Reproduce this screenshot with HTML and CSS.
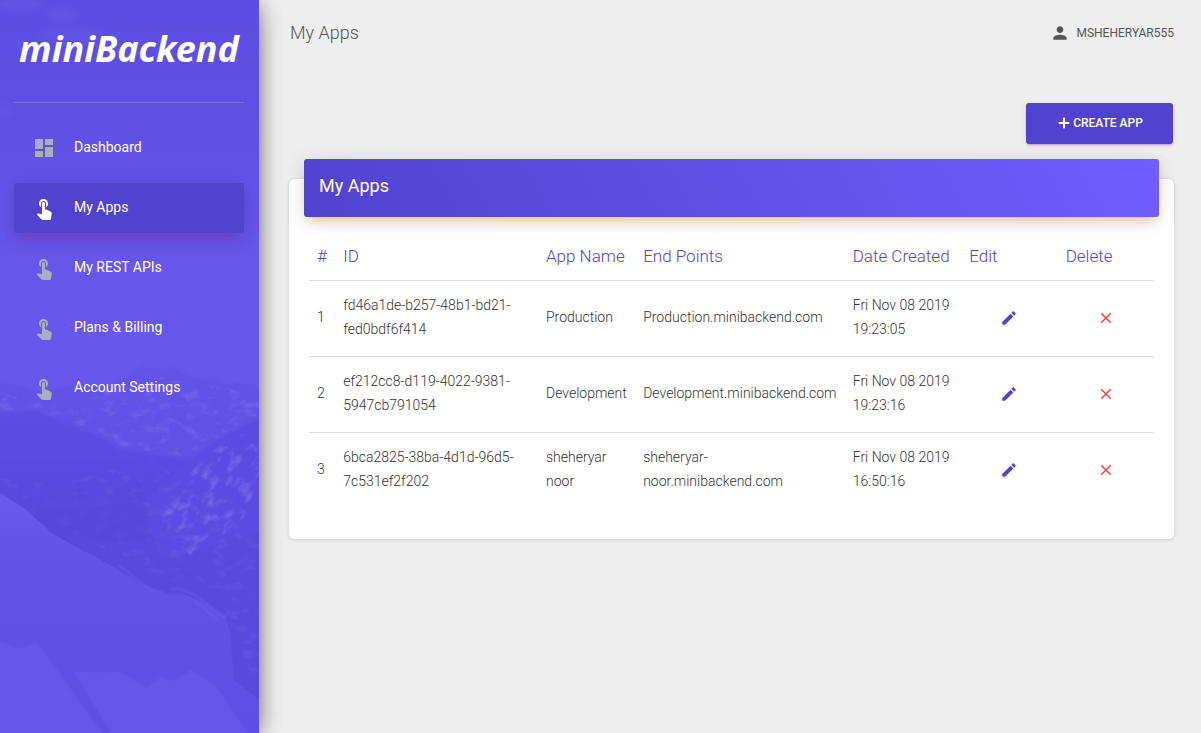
FILE: index.html
```
<!DOCTYPE html>
<html lang="en">
<head>
<meta charset="utf-8">
<title>miniBackend – My Apps</title>
<meta name="viewport" content="width=device-width, initial-scale=1">
<link rel="stylesheet" href="styles.css">
</head>
<body>
<svg class="sprite" aria-hidden="true">
  <symbol id="i-dashboard" viewBox="0 0 24 24"><path d="M3 13h8V3H3v10zm0 8h8v-6H3v6zm10 0h8V11h-8v10zm0-18v6h8V3h-8z"/></symbol>
  <symbol id="i-touch" viewBox="0 0 24 24"><path d="M9 11.24V7.5C9 6.12 10.12 5 11.5 5S14 6.12 14 7.5v3.74c1.21-.81 2-2.18 2-3.74C16 5.01 13.99 3 11.5 3S7 5.01 7 7.5c0 1.56.79 2.93 2 3.74zm9.84 4.63l-4.54-2.26c-.17-.07-.35-.11-.54-.11H13v-6c0-.83-.67-1.5-1.500-1.500S10 6.670 10 7.500v10.740l-3.430-.720c-.080-.010-.150-.030-.240-.030-.310 0-.590.130-.790.330l-.790.800 4.940 4.940c.270.270.650.440 1.060.440h6.790c.750 0 1.330-.550 1.440-1.280l.750-5.270c.010-.070.020-.140.020-.200 0-.620-.380-1.160-.910-1.380z"/></symbol>
  <symbol id="i-person" viewBox="0 0 24 24"><path d="M12 12c2.21 0 4-1.790 4-4s-1.790-4-4-4-4 1.790-4 4 1.790 4 4 4zm0 2c-2.670 0-8 1.340-8 4v2h16v-2c0-2.660-5.330-4-8-4z"/></symbol>
  <symbol id="i-add" viewBox="0 0 24 24"><path d="M20 13.500h-6.500V20h-3v-6.500H4v-3h6.500V4h3v6.500H20z"/></symbol>
  <symbol id="i-edit" viewBox="0 0 24 24"><path d="M3 17.250V21h3.750L17.810 9.940l-3.750-3.750L3 17.250zM20.710 7.040c.390-.390.390-1.020 0-1.410l-2.340-2.340c-.390-.390-1.020-.390-1.410 0l-1.830 1.830 3.750 3.750 1.830-1.830z"/></symbol>
  <symbol id="i-close" viewBox="0 0 24 24"><path d="M19 6.410L17.590 5 12 10.590 6.410 5 5 6.410 10.590 12 5 17.590 6.410 19 12 13.410 17.590 19 19 17.590 13.410 12z"/></symbol>
</svg>

<div class="layout">
  <aside class="sidebar">
    <svg class="scene" viewBox="0 0 259 733" preserveAspectRatio="xMidYMid slice" aria-hidden="true">
      <defs>
        <linearGradient id="sky" x1="0" y1="0" x2="0" y2="1">
          <stop offset="0" stop-color="#5d4de4"/><stop offset=".15" stop-color="#5e4fe5"/>
          <stop offset=".4" stop-color="#6857ec"/><stop offset="1" stop-color="#6757ec"/>
        </linearGradient>
        <linearGradient id="ridge" x1="0" y1="0" x2="0" y2="1">
          <stop offset="0" stop-color="#6353e8"/><stop offset="1" stop-color="#5e4ee5"/>
        </linearGradient>
        <linearGradient id="hill" x1="0" y1="0" x2="0" y2="1">
          <stop offset="0" stop-color="#5d4de4"/><stop offset=".4" stop-color="#5848df"/>
        </linearGradient>
        <linearGradient id="snow" x1="0" y1="0" x2="0" y2="1">
          <stop offset="0" stop-color="#6a5aee"/><stop offset=".3" stop-color="#6152e8"/><stop offset="1" stop-color="#5d4fe5"/>
        </linearGradient>
        <filter id="soft"><feGaussianBlur stdDeviation="3"/></filter>
        <filter id="edge"><feGaussianBlur stdDeviation="1"/></filter>
        <filter id="speckle" x="0" y="0" width="1" height="1">
          <feTurbulence type="fractalNoise" baseFrequency=".07 .12" numOctaves="4" seed="8"/>
          <feColorMatrix values="0 0 0 0 .44  0 0 0 0 .38  0 0 0 0 .94  3 0 0 0 -1.500"/>
          <feComposite in2="SourceGraphic" operator="in"/>
        </filter>
      </defs>
      <rect width="259" height="733" fill="url(#sky)"/>
      <g fill="#7061f0" opacity=".35" filter="url(#soft)">
        <ellipse cx="20" cy="4" rx="24" ry="6"/><ellipse cx="62" cy="15" rx="14" ry="8"/><ellipse cx="4" cy="110" rx="8" ry="6"/><ellipse cx="70" cy="35" rx="34" ry="5"/>
      </g>
      <path filter="url(#edge)" fill="url(#ridge)" d="M-5 382 20 386 40 392 56 388 75 386 100 385 120 380 134 371 145 365 158 370 170 367 180 371 192 378 204 380 212 378 226 383 242 382 264 388V570H-5z"/>
      <path fill="#7565f2" opacity=".18" filter="url(#speckle)" d="M0 392 30 401 70 405 120 384 146 372 170 380 205 384 259 394V425L180 456 120 446 70 420 0 412z"/>
      <path filter="url(#edge)" fill="url(#hill)" d="M-5 413 35 410 68 424 100 437 120 450 145 453 174 458 190 462 264 417V700H-5z"/>
      <path filter="url(#edge)" fill="#5c4ce3" d="M145 500 190 460 215 441 264 415V530L160 560z"/>
      <g transform="rotate(-48 215 490)"><path fill="#7767f3" opacity=".3" filter="url(#speckle)" d="M150 470 200 458 275 466V505L215 530 150 520z"/></g>
      <path fill="#7767f3" opacity=".1" filter="url(#speckle)" d="M0 478 60 485 150 458 259 540V695L220 600 70 540 0 492z"/>
      <path filter="url(#edge)" fill="#5646dc" d="m18 504 4-14 4 11 5-9 3 15 4-13 5 13 3-6 8-15 5-8 3-6 6 8 5 18 6-18 5 12 5 20 14-10 8 8 6-24 5-10 8 20 9-9 7 26v30H18z" opacity=".45"/>
      <path fill="url(#snow)" d="M0 493 24 508 53 534 80 549 112 566 140 583 169 594 184 594 207 604 226 618 230 632 234 680 259 700V733H0z"/>
      <path filter="url(#edge)" fill="none" stroke="#7564f0" stroke-width="2" opacity=".5" d="M170 589C193 587 204 604 225 617l4-4M118 565l37 28M193 600q12 8 24 20"/>
      <path filter="url(#edge)" fill="#6656eb" d="M-5 640 20 648 37 642 106 738H-5z"/>
      <path filter="url(#edge)" fill="#6656eb" d="M73 670 88 673 118 671 147 688 159 677 174 681 191 670 216 686 251 738H114z"/>
    </svg>
    <div class="sidebar-inner">
      <a class="brand" href="#">miniBackend</a>
      <nav class="menu" aria-label="Main">
        <a class="menu-item" href="#"><svg><use href="#i-dashboard"/></svg>Dashboard</a>
        <a class="menu-item active" href="#" aria-current="page"><svg><use href="#i-touch"/></svg>My Apps</a>
        <a class="menu-item" href="#"><svg><use href="#i-touch"/></svg>My REST APIs</a>
        <a class="menu-item" href="#"><svg><use href="#i-touch"/></svg>Plans &amp; Billing</a>
        <a class="menu-item" href="#"><svg><use href="#i-touch"/></svg>Account Settings</a>
      </nav>
    </div>
  </aside>

  <main class="main">
    <header class="topbar">
      <h1 class="page-title">My Apps</h1>
      <a class="user" href="#"><svg><use href="#i-person"/></svg>MSHEHERYAR555</a>
    </header>
    <div class="actions">
      <button class="create" type="button"><svg><use href="#i-add"/></svg>CREATE APP</button>
    </div>
    <section class="card">
      <h2 class="card-header">My Apps</h2>
      <table class="apps">
        <colgroup><col class="c-num"><col class="c-id"><col class="c-name"><col class="c-end"><col class="c-date"><col class="c-act"><col class="c-act"></colgroup>
        <thead>
          <tr><th>#</th><th>ID</th><th>App Name</th><th>End Points</th><th>Date Created</th><th>Edit</th><th>Delete</th></tr>
        </thead>
        <tbody>
          <tr>
            <td>1</td><td>fd46a1de-b257-48b1-bd21-fed0bdf6f414</td><td>Production</td><td>Production.minibackend.com</td><td>Fri Nov 08 2019 19:23:05</td>
            <td class="act"><button class="icon-btn edit" type="button" aria-label="Edit Production"><svg><use href="#i-edit"/></svg></button></td>
            <td class="act"><button class="icon-btn delete" type="button" aria-label="Delete Production"><svg><use href="#i-close"/></svg></button></td>
          </tr>
          <tr>
            <td>2</td><td>ef212cc8-d119-4022-9381-5947cb791054</td><td>Development</td><td>Development.minibackend.com</td><td>Fri Nov 08 2019 19:23:16</td>
            <td class="act"><button class="icon-btn edit" type="button" aria-label="Edit Development"><svg><use href="#i-edit"/></svg></button></td>
            <td class="act"><button class="icon-btn delete" type="button" aria-label="Delete Development"><svg><use href="#i-close"/></svg></button></td>
          </tr>
          <tr>
            <td>3</td><td>6bca2825-38ba-4d1d-96d5-7c531ef2f202</td><td>sheheryar noor</td><td>sheheryar-noor.minibackend.com</td><td>Fri Nov 08 2019 16:50:16</td>
            <td class="act"><button class="icon-btn edit" type="button" aria-label="Edit sheheryar noor"><svg><use href="#i-edit"/></svg></button></td>
            <td class="act"><button class="icon-btn delete" type="button" aria-label="Delete sheheryar noor"><svg><use href="#i-close"/></svg></button></td>
          </tr>
        </tbody>
      </table>
    </section>
  </main>
</div>
</body>
</html>
```
FILE: styles.css
```
* { box-sizing: border-box; }
body {
  margin: 0;
  background: #eee;
  color: #333;
  font: 300 14px/24px Roboto, sans-serif;
}
svg { fill: currentColor; flex: none; }
a { color: inherit; text-decoration: none; }
button { border: 0; font-family: inherit; cursor: pointer; }
.sprite { display: none; }

.layout { display: flex; min-height: 100vh; }

.sidebar {
  position: relative;
  z-index: 2;
  flex: 0 0 259px;
  background: #6252e8;
  color: #fff;
  box-shadow: 0 10px 30px -12px rgba(0, 0, 0, .42), 0 4px 25px 0 rgba(0, 0, 0, .12), 0 8px 10px -5px rgba(0, 0, 0, .2), 0 0 20px rgba(0, 0, 0, .3);
}
.scene { position: absolute; inset: 0; width: 100%; height: 100%; }
.sidebar-inner { position: relative; padding: 0 15px 0 14px; }
.brand {
  display: block;
  height: 103px;
  padding-top: 24px;
  border-bottom: 1px solid rgba(180, 180, 180, .3);
  font: italic 700 36px/50px "Noto Sans", sans-serif;
  text-align: center;
}
.menu { display: flex; flex-direction: column; gap: 10px; padding-top: 20px; }
.menu-item {
  display: flex;
  align-items: center;
  height: 50px;
  gap: 18px;
  padding: 0 18px 2px;
  border-radius: 3px;
  font-weight: 400;
}
.menu-item svg { width: 24px; height: 24px; margin-top: 2px; color: #a9afbb; }
.menu-item.active {
  background: #5143cf;
  box-shadow: 0 12px 20px -10px rgba(156, 39, 176, .28), 0 4px 20px 0 rgba(0, 0, 0, .12), 0 7px 8px -5px rgba(156, 39, 176, .2);
}
.menu-item.active svg { color: #fff; }

.main { flex: 1; min-width: 0; padding: 18px 27px 30px 30px; }
.topbar { display: flex; align-items: center; justify-content: space-between; height: 30px; }
.page-title { margin: 0; font-size: 18px; font-weight: 300; color: #555; padding-left: 1px; }
.user { display: flex; align-items: center; gap: 6px; font-size: 12px; font-weight: 400; color: #555; }
.user svg { width: 20px; height: 20px; }
.actions { display: flex; justify-content: flex-end; padding: 55px 1px 0 0; }
.create {
  display: flex;
  align-items: center;
  justify-content: center;
  gap: 1px;
  width: 147px;
  height: 41px;
  padding: 0 0 1px;
  border-radius: 3px;
  background: #5143cf;
  color: #fff;
  font-size: 12px;
  font-weight: 500;
  box-shadow: 0 2px 2px 0 rgba(156, 39, 176, .14), 0 3px 1px -2px rgba(156, 39, 176, .2), 0 1px 5px 0 rgba(156, 39, 176, .12);
}
.create svg { width: 16px; height: 16px; }

.card {
  margin-top: 35px;
  padding: 0 20px 31px;
  border-radius: 6px;
  background: #fff;
  box-shadow: 0 1px 4px 0 rgba(0, 0, 0, .14);
}
.card-header {
  position: relative;
  top: -20px;
  margin: 0 -5px -5px;
  padding: 15px 15px 19px;
  border-radius: 3px;
  background: linear-gradient(60deg, #5143cf, #705dff);
  color: #fff;
  font-size: 18px;
  font-weight: 400;
  box-shadow: 0 4px 20px 0 rgba(0, 0, 0, .14), 0 7px 10px -5px rgba(255, 152, 0, .4);
}
.apps { width: 100%; table-layout: fixed; border-collapse: collapse; }
.c-num { width: 3.1%; }
.c-id { width: 24%; }
.c-name { width: 11.5%; }
.c-end { width: 24.8%; }
.c-date { width: 13.8%; }
.apps th {
  height: 48px;
  padding: 0 8px;
  border-bottom: 1px solid #dcdcdc;
  color: #5143cf;
  font-size: 17px;
  font-weight: 300;
  text-align: left;
  white-space: nowrap;
}
.apps td { height: 76px; padding: 12px 8px 15px; vertical-align: middle; }
.apps tr + tr td { border-top: 1px solid #dcdcdc; }
.apps .act { padding: 0; text-align: center; }
.icon-btn { padding: 4px; background: none; line-height: 0; vertical-align: middle; }
.icon-btn svg { width: 18px; height: 18px; }
.edit { color: #5143cf; }
.delete { color: #f44336; }
```
